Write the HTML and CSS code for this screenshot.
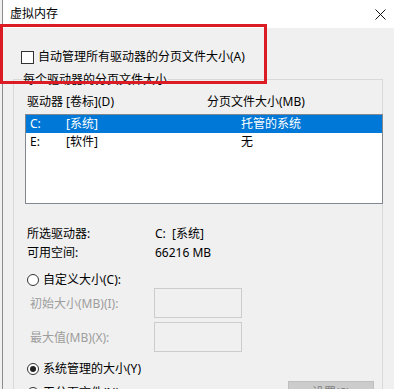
FILE: index.html
```html
<!DOCTYPE html>
<html lang="zh-CN">
<head>
<meta charset="utf-8">
<title>虚拟内存</title>
<link rel="stylesheet" href="styles.css">
</head>
<body>
<div class="window">
  <div class="frame">
    <div class="titlebar">
      <span class="title">虚拟内存</span>
      <svg class="close" width="11" height="11" viewBox="0 0 11 11"><path d="M0.5 0.5 L10.5 10.5 M10.5 0.5 L0.5 10.5" stroke="#111" stroke-width="1" fill="none"/></svg>
    </div>
    <div class="content">
      <div class="check-row"><span class="checkbox"></span><span>自动管理所有驱动器的分页文件大小(A)</span></div>
      <div class="group">
        <div class="group-title">每个驱动器的分页文件大小</div>
        <div class="list-head"><span class="col-drive">驱动器 [卷标](D)</span><span>分页文件大小(MB)</span></div>
        <div class="listbox">
          <div class="row selected"><span class="c1">C:</span><span class="c2">[系统]</span><span>托管的系统</span></div>
          <div class="row"><span class="c1">E:</span><span class="c2">[软件]</span><span>无</span></div>
        </div>
        <div class="info">
          <div class="info-row"><span class="info-label">所选驱动器:</span><span>C:&nbsp;&nbsp;[系统]</span></div>
          <div class="info-row"><span class="info-label">可用空间:</span><span>66216 MB</span></div>
        </div>
        <div class="radio-row custom"><span class="radio"></span><span>自定义大小(C):</span></div>
        <div class="field-row"><span class="field-label">初始大小(MB)(I):</span><span class="textbox"></span></div>
        <div class="field-row second"><span class="field-label">最大值(MB)(X):</span><span class="textbox"></span></div>
        <div class="radio-row managed"><span class="radio checked"></span><span>系统管理的大小(Y)</span></div>
        <div class="last-row">
          <div class="radio-row"><span class="radio"></span><span>无分页文件(N)</span></div>
          <span class="button">设置(S)</span>
        </div>
      </div>
    </div>
  </div>
  <div class="annotation"></div>
</div>
</body>
</html>
```

FILE: styles.css
```css
html, body {
  margin: 0;
  padding: 0;
}
body {
  width: 394px;
  height: 389px;
  overflow: hidden;
  background: #f0f0f0;
  font-family: "Noto Sans", "Noto Sans CJK SC", sans-serif;
  font-size: 12px;
  color: #000;
}
.window {
  position: relative;
  width: 394px;
  height: 389px;
  overflow: hidden;
  background: #f0f0f0;
}
.frame {
  margin-left: 2px;
  border-left: 1px solid #8c8c8c;
  height: 389px;
}
.titlebar {
  height: 28px;
  background: #fff;
  display: flex;
  align-items: center;
  justify-content: space-between;
  padding: 0 8px 0 7px;
}
.title {
  line-height: 16px;
}
.close {
  display: block;
  margin-top: 1px;
}
.content {
  padding-top: 21px;
}
.check-row {
  display: flex;
  align-items: center;
  gap: 4px;
  height: 16px;
  line-height: 16px;
  padding-left: 18px;
}
.checkbox {
  width: 13px;
  height: 13px;
  box-sizing: border-box;
  border: 1px solid #333;
  background: #fff;
}
.group {
  margin-top: 14px;
  margin-left: 10px;
  width: 370px;
  height: 320px;
  box-sizing: border-box;
  border: 1px solid #d9d9d9;
  border-bottom: none;
  padding-left: 11px;
}
.group-title {
  width: max-content;
  margin-top: -8px;
  margin-left: -3px;
  padding: 0 1px;
  line-height: 16px;
  background: #f0f0f0;
}
.list-head {
  display: flex;
  margin-top: 6px;
  line-height: 16px;
  padding-left: 2px;
}
.col-drive {
  width: 180px;
}
.listbox {
  margin-top: 4px;
  width: 358px;
  height: 90px;
  box-sizing: border-box;
  border: 1px solid #828790;
  background: #fff;
}
.row {
  display: flex;
  height: 18px;
  line-height: 18px;
  padding-left: 4px;
}
.row.selected {
  background: #0078d7;
  color: #fff;
}
.c1 {
  width: 36px;
}
.c2 {
  width: 175px;
}
.info {
  margin-top: 20px;
  padding-left: 2px;
}
.info-row {
  display: flex;
  line-height: 19px;
}
.info-label {
  width: 128px;
}
.radio-row {
  display: flex;
  align-items: center;
  gap: 4px;
  height: 16px;
  line-height: 16px;
  padding-left: 2px;
}
.radio-row.custom {
  margin-top: 10px;
}
.radio-row.managed {
  margin-top: 9px;
}
.radio {
  position: relative;
  width: 12px;
  height: 12px;
  box-sizing: border-box;
  border: 1px solid #333;
  border-radius: 50%;
  background: #fff;
}
.radio.checked::after {
  content: "";
  position: absolute;
  left: 2px;
  top: 2px;
  width: 6px;
  height: 6px;
  border-radius: 50%;
  background: #222;
}
.field-row {
  display: flex;
  align-items: center;
  height: 30px;
  padding-left: 5px;
  color: #9d9d9d;
}
.field-row.second {
  margin-top: 4px;
}
.field-label {
  width: 124px;
}
.textbox {
  width: 88px;
  height: 30px;
  box-sizing: border-box;
  border: 1px solid #cccccc;
  background: #f0f0f0;
}
.last-row {
  display: flex;
  align-items: flex-start;
  margin-top: 4px;
}
.last-row .radio-row {
  margin-top: 4px;
}
.button {
  margin-left: auto;
  margin-right: 8px;
  width: 86px;
  height: 23px;
  box-sizing: border-box;
  border: 1px solid #bfbfbf;
  background: #cccccc;
  color: #838383;
  text-align: center;
  line-height: 21px;
}
.annotation {
  position: absolute;
  left: 0;
  top: 24px;
  width: 267px;
  height: 60px;
  box-sizing: border-box;
  border: 3px solid #db1c24;
}
```
